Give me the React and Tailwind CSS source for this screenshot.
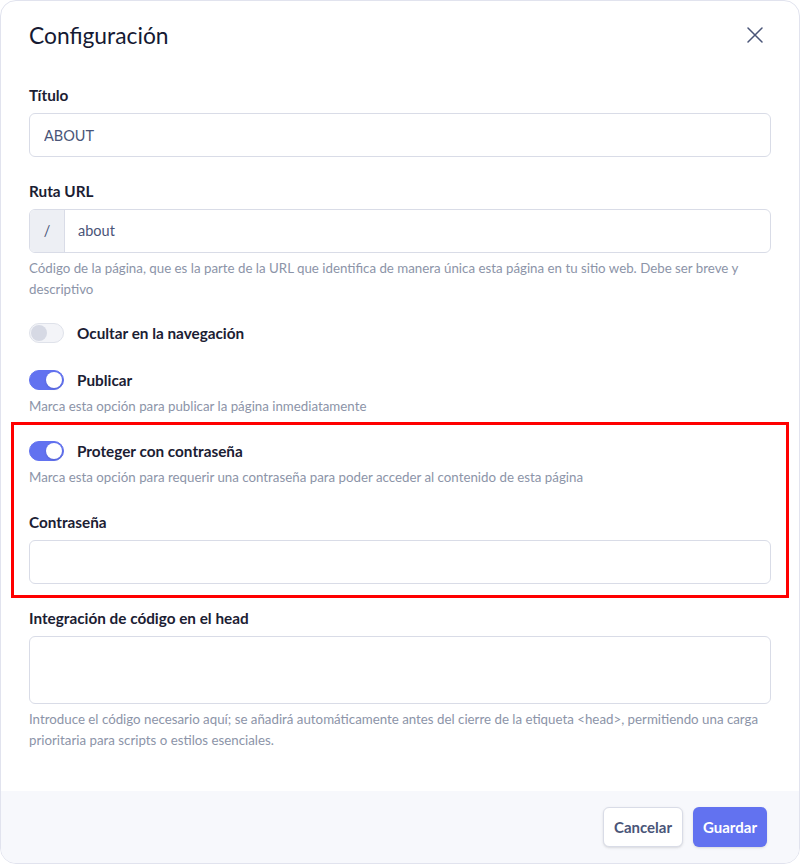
import { useState } from 'react';

const Toggle = ({ checked, onChange }) => (
  <button
    type="button"
    onClick={onChange}
    className={`relative flex h-[20px] w-[35px] shrink-0 items-center rounded-full border px-[1px] ${
      checked ? 'border-[#6272f0] bg-[#6272f0]' : 'border-[#dfe2ea] bg-[#f3f4f8]'
    }`}
  >
    <span
      className={`h-[16px] w-[16px] rounded-full ${
        checked ? 'ml-auto bg-white shadow-sm' : 'bg-[#d6d9e4]'
      }`}
    />
  </button>
);

const Label = ({ children }) => (
  <div className="text-[15.3px] font-bold leading-[20px] text-[#1b2033]">{children}</div>
);

const Help = ({ children, className = '' }) => (
  <p className={`text-[13.3px] leading-[21px] text-[#8c94a8] ${className}`}>{children}</p>
);

const inputCls =
  'h-[44px] w-full rounded-md border border-[#d9dce7] bg-white px-[14px] text-[14.5px] text-[#4a5578] outline-none';

export default function App() {
  const [form, setForm] = useState({
    title: 'ABOUT',
    slug: 'about',
    hidden: false,
    published: true,
    protect: true,
    password: '',
    head: ''
  });

  const set = (key) => (e) => setForm((f) => ({ ...f, [key]: e.target.value }));
  const flip = (key) => () => setForm((f) => ({ ...f, [key]: !f[key] }));

  return (
    <div className="min-h-[864px] bg-white" style={{ fontFamily: 'Lato, "Noto Sans", sans-serif' }}>
      <div className="h-[864px] w-[800px] overflow-hidden rounded-[16px] border border-[#e1e3ee] bg-white flex flex-col">
        <div className="flex items-center justify-between px-[28px] pt-[18px]">
          <h2 className="text-[22.8px] leading-[32px] text-[#151a33]">Configuración</h2>
          <button type="button" className="mr-[8px] text-[#4a5578]">
            <svg width="16" height="16" viewBox="0 0 16 16" fill="none" stroke="currentColor" strokeWidth="1.5" strokeLinecap="round">
              <path d="M1 1l14 14M15 1L1 15" />
            </svg>
          </button>
        </div>

        <div className="flex-1 px-[28px] pt-[34px]">
          <Label>Título</Label>
          <input className={`${inputCls} mt-[8px]`} value={form.title} onChange={set('title')} />

          <div className="mt-[24px]">
            <Label>Ruta URL</Label>
          </div>
          <div className="mt-[8px] flex h-[44px] overflow-hidden rounded-md border border-[#d9dce7]">
            <span className="flex w-[35px] items-center justify-center border-r border-[#d9dce7] bg-[#edeff4] text-[14.5px] text-[#4a5578]">
              /
            </span>
            <input
              className="flex-1 px-[13px] text-[14.5px] text-[#4a5578] outline-none"
              value={form.slug}
              onChange={set('slug')}
            />
          </div>
          <Help className="mt-[5px]">
            Código de la página, que es la parte de la URL que identifica de manera única esta página en tu sitio web. Debe ser breve y descriptivo
          </Help>

          <div className="mt-[21px] flex h-[24px] items-center gap-[13px]">
            <Toggle checked={form.hidden} onChange={flip('hidden')} />
            <Label>Ocultar en la navegación</Label>
          </div>

          <div className="mt-[23px] flex h-[24px] items-center gap-[13px]">
            <Toggle checked={form.published} onChange={flip('published')} />
            <Label>Publicar</Label>
          </div>
          <Help className="mt-[4px]">Marca esta opción para publicar la página inmediatamente</Help>

          <div className="-mx-[18px] mt-[5px] border-[3px] border-[#ff0000] px-[15px] pt-[14px] pb-[11px]">
            <div className="flex h-[24px] items-center gap-[13px]">
              <Toggle checked={form.protect} onChange={flip('protect')} />
              <Label>Proteger con contraseña</Label>
            </div>
            <Help className="mt-[4px]">
              Marca esta opción para requerir una contraseña para poder acceder al contenido de esta página
            </Help>
            <div className="mt-[24px]">
              <Label>Contraseña</Label>
            </div>
            <input type="password" className={`${inputCls} mt-[8px]`} value={form.password} onChange={set('password')} />
          </div>

          <div className="mt-[10px]">
            <Label>Integración de código en el head</Label>
          </div>
          <textarea
            className="mt-[8px] block h-[68px] w-full resize-none rounded-md border border-[#d9dce7] px-[14px] py-[10px] text-[14.5px] text-[#4a5578] outline-none"
            value={form.head}
            onChange={set('head')}
          />
          <Help className="mt-[5px]">
            Introduce el código necesario aquí; se añadirá automáticamente antes del cierre de la etiqueta &lt;head&gt;, permitiendo una carga prioritaria para scripts o estilos esenciales.
          </Help>
        </div>

        <div className="flex h-[72px] items-center justify-end gap-[10px] bg-[#f7f8fc] px-[32px]">
          <button
            type="button"
            className="h-[40px] rounded-md border border-[#d9dce7] bg-white px-[10px] text-[15px] font-bold text-[#4a5578] shadow-sm"
          >
            Cancelar
          </button>
          <button
            type="button"
            className="h-[40px] rounded-md bg-[#6272f0] px-[10px] text-[15px] font-bold text-white shadow-sm"
          >
            Guardar
          </button>
        </div>
      </div>
    </div>
  );
}
